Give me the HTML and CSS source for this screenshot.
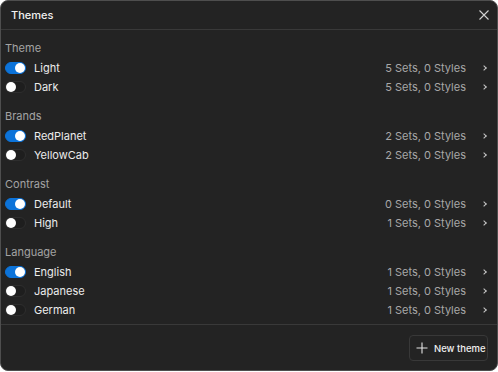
FILE: index.html
```html
<!DOCTYPE html>
<html>
<head>
<meta charset="utf-8">
<link rel="stylesheet" href="styles.css">
</head>
<body>
<div class="panel">
  <div class="header">
    <span class="title">Themes</span>
    <svg class="close" width="12" height="12" viewBox="0 0 12 12"><path d="M1.5 1.5 L10.5 10.5 M10.5 1.5 L1.5 10.5" stroke="#d0d0d0" stroke-width="1.1" fill="none"/></svg>
  </div>
  <div class="content">
    <div class="section">
      <div class="section-label">Theme</div>
      <div class="row"><span class="toggle on"></span><span class="name">Light</span><span class="meta">5 Sets, 0 Styles</span><span class="chev"></span></div>
      <div class="row"><span class="toggle"></span><span class="name">Dark</span><span class="meta">5 Sets, 0 Styles</span><span class="chev"></span></div>
    </div>
    <div class="section">
      <div class="section-label">Brands</div>
      <div class="row"><span class="toggle on"></span><span class="name">RedPlanet</span><span class="meta">2 Sets, 0 Styles</span><span class="chev"></span></div>
      <div class="row"><span class="toggle"></span><span class="name">YellowCab</span><span class="meta">2 Sets, 0 Styles</span><span class="chev"></span></div>
    </div>
    <div class="section">
      <div class="section-label">Contrast</div>
      <div class="row"><span class="toggle on"></span><span class="name">Default</span><span class="meta">0 Sets, 0 Styles</span><span class="chev"></span></div>
      <div class="row"><span class="toggle"></span><span class="name">High</span><span class="meta">1 Sets, 0 Styles</span><span class="chev"></span></div>
    </div>
    <div class="section">
      <div class="section-label">Language</div>
      <div class="row"><span class="toggle on"></span><span class="name">English</span><span class="meta">1 Sets, 0 Styles</span><span class="chev"></span></div>
      <div class="row"><span class="toggle"></span><span class="name">Japanese</span><span class="meta">1 Sets, 0 Styles</span><span class="chev"></span></div>
      <div class="row"><span class="toggle"></span><span class="name">German</span><span class="meta">1 Sets, 0 Styles</span><span class="chev"></span></div>
    </div>
  </div>
  <div class="footer">
    <button class="new-btn">
      <svg width="12" height="12" viewBox="0 0 12 12"><path d="M6 0.5 V11.5 M0.5 6 H11.5" stroke="#e6e6e6" stroke-width="1.1" fill="none"/></svg>
      <span>New theme</span>
    </button>
  </div>
</div>
</body>
</html>
```

FILE: styles.css
```css
* { box-sizing: border-box; }
html, body { margin: 0; padding: 0; background: #ffffff; }
body { font-family: Inter, "Noto Sans", sans-serif; font-size: 11px; -webkit-font-smoothing: antialiased; }

.panel {
  width: 498px;
  height: 371px;
  background: #232323;
  border: 1px solid #4e4e4e;
  border-radius: 8px;
  display: flex;
  flex-direction: column;
  overflow: hidden;
}

.header {
  height: 29px;
  display: flex;
  align-items: center;
  justify-content: space-between;
  padding: 0 7px 0 10px;
  border-bottom: 1px solid #393939;
  flex: none;
}
.title { color: #f0f0f0; font-weight: 500; font-size: 11px; }
.close { display: block; }

.content {
  padding: 8px 0 5px 0;
  display: flex;
  flex-direction: column;
  gap: 10px;
  border-bottom: 1px solid #393939;
}

.section-label {
  height: 20px;
  line-height: 20px;
  padding-left: 4px;
  color: #a3a3a3;
  font-size: 11px;
}

.row {
  height: 19px;
  display: flex;
  align-items: center;
  padding-left: 4px;
  padding-right: 11px;
}

.toggle {
  width: 21px;
  height: 12px;
  border-radius: 6px;
  background: #1e1e1e;
  border: 1px solid #2e2e2e;
  position: relative;
  flex: none;
}
.toggle::after {
  content: "";
  position: absolute;
  top: 0px;
  left: 0px;
  width: 10px;
  height: 10px;
  border-radius: 50%;
  background: #ffffff;
}
.toggle.on { background: #0c73d9; border-color: #0c73d9; }
.toggle.on::after { left: 9px; }

.name {
  margin-left: 8px;
  color: #ececec;
  flex: 1;
}

.meta { color: #a8a8a8; }

.chev {
  width: 4px;
  height: 4px;
  border-right: 1.2px solid #c8c8c8;
  border-top: 1.2px solid #c8c8c8;
  transform: rotate(45deg);
  margin-left: 16px;
}

.footer {
  flex: 1;
  display: flex;
  justify-content: flex-end;
  align-items: flex-start;
  padding: 10px 9px 0 0;
}

.new-btn {
  height: 26px;
  width: 79px;
  background: #232323;
  border: 1px solid #383838;
  border-radius: 4px;
  display: flex;
  align-items: center;
  gap: 6px;
  padding: 0 0 0 6px;
  color: #f0f0f0;
  font-family: Inter, "Noto Sans", sans-serif;
  font-size: 9.5px;
  font-weight: 500;
  white-space: nowrap;
}
.new-btn svg { display: block; flex: none; }
```
